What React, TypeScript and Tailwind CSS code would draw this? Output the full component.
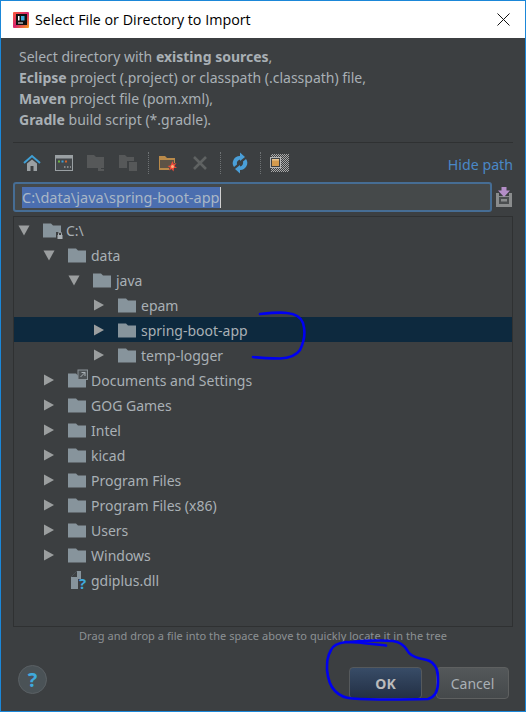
import React from "react";

const Tri = ({ open }: { open?: boolean }) => (
  <svg width="12" height="12" viewBox="0 0 12 12" className="shrink-0">
    {open ? <path d="M0.5 1.5H11.5L6 11.5Z" fill="#9b9e9f" /> : <path d="M1 0.5L11 6L1 11.5Z" fill="#9b9e9f" />}
  </svg>
);

const Folder = ({ badge }: { badge?: "lock" | "link" }) => (
  <svg width="20" height="18" viewBox="0 0 20 18" className="shrink-0 overflow-visible">
    <path d="M0 2.5H8L10 4.5H18V16.500H0Z" fill="#87949c" />
    {badge === "lock" && (
      <g>
        <rect x="13" y="11" width="7" height="7.5" fill="#3c3f41" />
        <rect x="14.5" y="14" width="5" height="4" fill="#a9b0b5" />
        <path d="M15.5 14V12.5A1.5 1.5 0 0 1 18.5 12.5V14" fill="none" stroke="#a9b0b5" />
      </g>
    )}
    {badge === "link" && (
      <g>
        <rect x="10" y="-1" width="9.5" height="9.5" fill="#4d5255" stroke="#8a9297" />
        <path d="M12.5 6L17 1.5M13.5 1.5H17V5" fill="none" stroke="#a9b0b5" />
      </g>
    )}
  </svg>
);

const FileQ = () => (
  <span className="relative block w-5 h-[18px] shrink-0">
    <svg width="20" height="20" viewBox="0 0 20 20" className="absolute left-0 -top-px">
      <path d="M3 7L9 1H13V9H10V19H3Z" fill="#87949c" />
      <path d="M9 1V7H3Z" fill="#3c3f41" />
    </svg>
    <span className="absolute left-[11px] top-[3px] text-[15px] leading-[18px] font-bold text-[#3fa9dc] font-['Open_Sans',sans-serif]">?</span>
  </span>
);

type Row = { t: string; d: number; a?: "open" | "closed"; badge?: "lock" | "link"; sel?: boolean; file?: boolean };

const rows: Row[] = [
  { t: "C:\\", d: 0, a: "open", badge: "lock" },
  { t: "data", d: 1, a: "open" },
  { t: "java", d: 2, a: "open" },
  { t: "epam", d: 3, a: "closed" },
  { t: "spring-boot-app", d: 3, a: "closed", sel: true },
  { t: "temp-logger", d: 3, a: "closed" },
  { t: "Documents and Settings", d: 1, a: "closed", badge: "link" },
  { t: "GOG Games", d: 1, a: "closed" },
  { t: "Intel", d: 1, a: "closed" },
  { t: "kicad", d: 1, a: "closed" },
  { t: "Program Files", d: 1, a: "closed" },
  { t: "Program Files (x86)", d: 1, a: "closed" },
  { t: "Users", d: 1, a: "closed" },
  { t: "Windows", d: 1, a: "closed" },
  { t: "gdiplus.dll", d: 1, file: true },
];

const Slot = ({ children }: { children: React.ReactNode }) => (
  <span className="w-[32px] flex items-center justify-center shrink-0">{children}</span>
);

const Dots = () => (
  <span className="w-[8px] flex justify-center shrink-0">
    <span className="w-0 h-[22px] border-l border-dotted border-[#6e7274]" />
  </span>
);

const Toolbar = () => (
  <div className="flex items-center h-[27px] pl-[15px] pr-[12px] mt-[6px]">
    <Slot>
      <svg width="18" height="18" viewBox="0 0 18 18">
        <path d="M1 9L9 2L17 9" fill="none" stroke="#3f9fd4" strokeWidth="2" />
        <path d="M4 9.5L9 5.5L14 9.5V17H10.5V12H7.5V17H4Z" fill="#9aa0a3" />
      </svg>
    </Slot>
    <Slot>
      <svg width="18" height="16" viewBox="0 0 18 16">
        <rect x="0.5" y="0.5" width="17" height="15" fill="#43474a" stroke="#9aa0a3" />
        <rect x="1" y="1" width="16" height="2.5" fill="#9aa0a3" />
        <rect x="3" y="5.5" width="2" height="2" fill="#6cb33f" />
        <rect x="6.5" y="5.5" width="2" height="2" fill="#3f9fd4" />
        <rect x="10" y="5.5" width="2" height="2" fill="#d2622a" />
        <path d="M9 12h1.500M12 12h1.500M15 12h1" stroke="#c8c8c8" />
      </svg>
    </Slot>
    <Slot>
      <svg width="20" height="18" viewBox="0 0 20 18">
        <path d="M1 1H8L10 3H18V14H15V17H12V14H1Z" fill="#565859" />
        <rect x="14" y="15" width="4" height="2" fill="#565859" />
      </svg>
    </Slot>
    <Slot>
      <svg width="20" height="18" viewBox="0 0 20 18">
        <path d="M1 1H7L9 3H16V7H9V14H1Z" fill="#565859" />
        <rect x="11" y="8" width="8" height="9" fill="#565859" />
      </svg>
    </Slot>
    <Dots />
    <Slot>
      <svg width="20" height="20" viewBox="0 0 20 20">
        <path d="M1 3H7L9 5H17V10H16V7H3V15H11V17H1Z" fill="#b98a4a" />
        <rect x="2" y="7" width="14" height="8" fill="#5d5346" />
        <path d="M14.5 8L15.5 11L18.5 10L16.5 13L19 15L16 15L15.500 18.500L13.500 16L11 17.500L12 14.500L9.500 13L12.500 12.500Z" fill="#ef4a3a" />
        <circle cx="14.5" cy="13.5" r="1.5" fill="#ffb27a" />
      </svg>
    </Slot>
    <Slot>
      <svg width="14" height="14" viewBox="0 0 14 14">
        <path d="M1 1L13 13M13 1L1 13" stroke="#5f6262" strokeWidth="2.6" />
      </svg>
    </Slot>
    <Dots />
    <Slot>
      <svg width="20" height="22" viewBox="0 0 20 22">
        <path d="M10 4A7 7 0 0 0 4 15L7 12.5A4 4 0 0 1 10 7.5Z" fill="#4a9fd8" />
        <path d="M10 0.5L15 5L10 9Z" fill="#4a9fd8" />
        <path d="M10 18A7 7 0 0 0 16 7L13 9.5A4 4 0 0 1 10 14.5Z" fill="#4a9fd8" />
        <path d="M10 13L5 17L10 21.5Z" fill="#4a9fd8" />
      </svg>
    </Slot>
    <Dots />
    <Slot>
      <svg width="20" height="18" viewBox="0 0 20 18">
        <defs>
          <pattern id="chk" width="2" height="2" patternUnits="userSpaceOnUse">
            <rect width="1" height="1" fill="#a8a8a8" />
            <rect x="1" y="1" width="1" height="1" fill="#a8a8a8" />
          </pattern>
        </defs>
        <rect x="1" y="0" width="18" height="18" fill="url(#chk)" />
        <rect x="0.5" y="3.5" width="10" height="10" fill="#3c3f41" stroke="#b4b4b4" />
        <rect x="2" y="5" width="7" height="7" fill="#d39a4e" />
        <rect x="2" y="5" width="7" height="1.5" fill="#e8c48e" />
      </svg>
    </Slot>
    <a className="ml-auto text-[14.2px] leading-[20px] text-[#4a88c7] translate-y-[2px]">Hide path</a>
  </div>
);

export default function App() {
  return (
    <div className="relative w-[526px] h-[712px] overflow-hidden flex flex-col bg-[#3c3f41] border-x border-x-[#1b87d8] border-y border-y-[#1b87d8] font-['Noto_Sans','Open_Sans',sans-serif] text-[#a9b0b5]">
      <div className="h-[37px] shrink-0 bg-white flex items-center pl-[12px] pr-[15px] text-black text-[14.3px] font-['Open_Sans',sans-serif]">
        <svg width="16" height="16" viewBox="0 0 16 16" className="shrink-0">
          <defs>
            <linearGradient id="ij" x1="0" y1="0" x2="1" y2="1">
              <stop offset="0" stopColor="#fc5d3a" />
              <stop offset="0.5" stopColor="#d6246f" />
              <stop offset="1" stopColor="#f9a21a" />
            </linearGradient>
          </defs>
          <rect width="16" height="16" rx="1" fill="url(#ij)" />
          <rect x="3" y="2" width="11" height="11" fill="#111" />
          <rect x="5" y="4" width="1.5" height="4.5" fill="#fff" />
          <rect x="8" y="4" width="3.5" height="4.5" fill="#3fa9dc" />
          <rect x="5" y="10.5" width="5" height="1" fill="#fff" />
        </svg>
        <span className="ml-[6px]">Select File or Directory to Import</span>
        <svg width="13" height="13" viewBox="0 0 13 13" className="ml-auto">
          <path d="M0.5 0.5L12.5 12.5M12.5 0.5L0.5 12.5" stroke="#111" strokeWidth="1" />
        </svg>
      </div>

      <div className="pl-[18px] pt-[8px] text-[14px] leading-[21px] h-[104px] shrink-0">
        <div>Select directory with <b>existing sources</b>,</div>
        <div><b>Eclipse</b> project (.project) or classpath (.classpath) file,</div>
        <div><b>Maven</b> project file (pom.xml),</div>
        <div><b>Gradle</b> build script (*.gradle).</div>
      </div>

      <div className="mx-[12px] w-[500px] border-t border-[#2f3132]" />
      <Toolbar />

      <div className="flex items-center mt-[6px] ml-[12px] mr-[13px] gap-[4px]">
        <div className="w-[480px] h-[30px] rounded-[3px] border-2 border-[#466d94] bg-[#45494a] flex items-center pl-[7px] text-[14.5px]">
          <span className="bg-[#4b6eaf] leading-[21px] text-[#a9b7c6] border-r border-[#d0d0d0]">C:\data\java\spring-boot-app</span>
        </div>
        <svg width="16" height="20" viewBox="0 0 16 20" className="shrink-0">
          <path d="M0 6H3V9H13V6H16V20H0Z" fill="#8a8c8d" />
          <rect x="3" y="10" width="10" height="7" fill="#4b4e50" />
          <rect x="5" y="12" width="6" height="2.5" fill="#8a8c8d" />
          <path d="M5.5 0H10.5V3.5H14L8 10L2 3.5H5.5Z" fill="#b48ec8" />
        </svg>
      </div>

      <div className="mt-[4px] ml-[12px] w-[500px] h-[411px] border border-[#2f3132] bg-[#3c3f41]">
        {rows.map((r) => (
          <div key={r.t} className={`flex items-center h-[25px] text-[14px] ${r.sel ? "bg-[#0d293e]" : ""}`}>
            <div className="flex items-center h-full" style={{ paddingLeft: 4 + r.d * 25 }}>
              <span className="w-[12px] flex justify-center shrink-0">
                {r.a ? <Tri open={r.a === "open"} /> : null}
              </span>
              <span className="ml-[13px] flex items-center">
                {r.file ? <FileQ /> : <Folder badge={r.badge} />}
              </span>
              <span className="ml-[3px] whitespace-nowrap translate-y-[1px]">{r.t}</span>
            </div>
          </div>
        ))}
      </div>

      <div className="text-center text-[11px] leading-[16px] tracking-[0.05px] text-[#8c9194] mt-[1px]">
        Drag and drop a file into the space above to quickly locate it in the tree
      </div>

      <div className="flex items-center pl-[17px] pr-[16px] mt-[21px]">
        <div className="w-[29px] h-[29px] mb-[6px] rounded-full bg-[#4a5256] border border-[#5a6064] flex items-center justify-center text-[20px] font-bold text-[#3fa9dc] leading-none font-['Open_Sans',sans-serif]">?</div>
        <div className="ml-auto flex gap-[14px]">
          <button className="w-[73px] h-[32px] pt-[1px] rounded-[4px] border border-[#55595c] bg-gradient-to-b from-[#384c67] to-[#233045] text-[14px] font-bold text-[#bbbbbb]">OK</button>
          <button className="w-[73px] h-[32px] pt-[1px] rounded-[4px] border border-[#5e6060] bg-gradient-to-b from-[#54585a] to-[#45494b] text-[14px] text-[#a9b0b5]">Cancel</button>
        </div>
      </div>

      <svg width="526" height="712" viewBox="0 0 526 712" className="absolute -left-px -top-px pointer-events-none">
        <path d="M260 314C270 313 280 312 287 313C296 314 301 317 303 323C306 333 304 342 300 350C296 356 290 358 280 358.500C270 358.500 260 358 253 357" fill="none" stroke="#0000f0" strokeWidth="2.6" strokeLinecap="round" />
        <path d="M386 645.500C372 644 358 642 346 642C338 643 333 645 331 650C327 657 327 662 327 670C328 680 330 686 335 691C340 696 345 698 352 698.500C375 700 405 699.500 428 699C435 697 438 690 438 682C438 675 438 670 435 666C431 660 427 660 420 658.500C413 657 409 654 407 650C404 645 399 642 393 641C380 640 362 641 350 642" fill="none" stroke="#0000f0" strokeWidth="2.6" strokeLinecap="round" />
      </svg>
    </div>
  );
}
